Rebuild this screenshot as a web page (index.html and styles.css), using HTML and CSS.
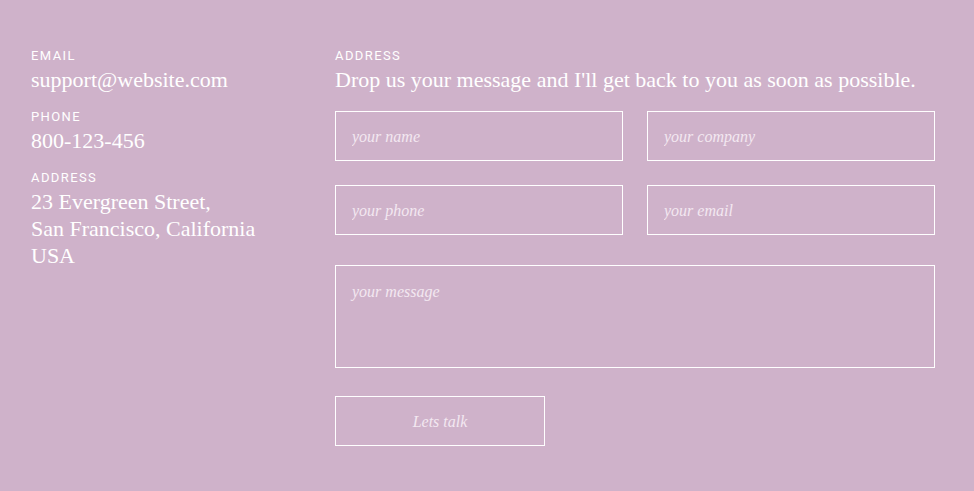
FILE: index.html
```html
<!DOCTYPE html>
<html>
<head>
<meta charset="utf-8">
<link rel="stylesheet" href="styles.css">
</head>
<body>
<div class="contact">
  <div class="info">
    <div class="item">
      <div class="label">EMAIL</div>
      <div class="value">support@website.com</div>
    </div>
    <div class="item">
      <div class="label">PHONE</div>
      <div class="value">800-123-456</div>
    </div>
    <div class="item">
      <div class="label">ADDRESS</div>
      <div class="value">23 Evergreen Street,<br>San Francisco, California<br>USA</div>
    </div>
  </div>
  <div class="form-col">
    <div class="label">ADDRESS</div>
    <div class="value">Drop us your message and I'll get back to you as soon as possible.</div>
    <form class="form">
      <div class="row">
        <input class="field" type="text" placeholder="your name">
        <input class="field" type="text" placeholder="your company">
      </div>
      <div class="row">
        <input class="field" type="text" placeholder="your phone">
        <input class="field" type="text" placeholder="your email">
      </div>
      <textarea class="message" placeholder="your message"></textarea>
      <button class="submit" type="button">Lets talk</button>
    </form>
  </div>
</div>
</body>
</html>
```
FILE: styles.css
```css
html, body {
  margin: 0;
  padding: 0;
}
body {
  background: #cfb2ca;
  color: #ffffff;
  width: 974px;
  height: 491px;
  overflow: hidden;
}
.contact {
  display: flex;
  padding: 48px 0 0 31px;
}
.info {
  width: 304px;
  display: flex;
  flex-direction: column;
  gap: 16px;
}
.label {
  font-family: Roboto, "Liberation Sans", sans-serif;
  font-size: 13px;
  line-height: 16px;
  letter-spacing: 1.4px;
  margin-bottom: 2px;
}
.value {
  font-family: "Liberation Serif", serif;
  font-size: 22px;
  line-height: 27px;
}
.form-col {
  width: 600px;
}
.form {
  margin-top: 18px;
  display: flex;
  flex-direction: column;
  align-items: flex-start;
}
.row {
  display: flex;
  gap: 24px;
  margin-bottom: 24px;
}
.row:nth-child(2) {
  margin-bottom: 30px;
}
.field, .message, .submit {
  box-sizing: border-box;
  background: transparent;
  border: 1px solid #ffffff;
  border-radius: 0;
  color: #ffffff;
  font-family: "Liberation Serif", serif;
  font-style: italic;
  font-size: 16px;
  outline: none;
  margin: 0;
}
.field {
  width: 288px;
  height: 50px;
  padding: 2px 16px 0;
}
.message {
  width: 600px;
  height: 103px;
  padding: 17px 16px 16px;
  resize: none;
  margin-bottom: 28px;
}
.field::placeholder, .message::placeholder {
  color: #f3e8f1;
  opacity: 1;
}
.submit {
  width: 210px;
  height: 50px;
  padding-top: 3px;
  color: #f3e8f1;
  text-align: center;
}
```
